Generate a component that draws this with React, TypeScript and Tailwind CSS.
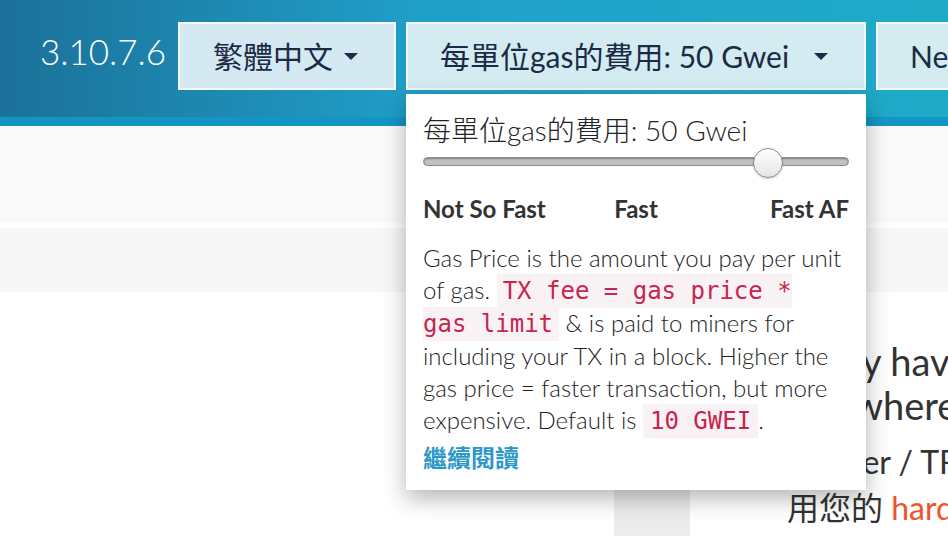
export default function App() {
  return (
    <div className="relative w-[948px] h-[536px] overflow-hidden bg-white font-['Lato','Noto_Sans_CJK_TC',sans-serif] text-[#333]">
      <header className="h-[117px] bg-linear-to-r from-[#1b7199] via-[#20a0ca] via-45% to-[#1faac8]">
        <div className="flex items-start pt-[22px] pl-[40px] gap-[10px]">
          <div className="shrink-0 w-[128px] h-[58px] flex items-center text-[35px] font-light text-white leading-none whitespace-nowrap">3.10.7.6</div>
          <button className="shrink-0 w-[218px] h-[68px] flex items-center justify-between pl-[33px] pr-[36px] bg-[#d4e9f1] border-2 border-[#f3f9fb] text-[#1c2b45] text-[30px] leading-none">
            <span>繁體中文</span>
            <span className="w-0 h-0 border-x-[7px] border-x-transparent border-t-[7px] border-t-[#1d2d49]" />
          </button>
          <div className="relative shrink-0">
            <button className="w-[460px] h-[68px] flex items-center justify-between pl-[32px] pr-[36px] bg-[#d4ebf2] border-2 border-[#f3f9fb] text-[#1c2b45] text-[30px] leading-none whitespace-nowrap">
              <span>每單位gas的費用: 50 Gwei</span>
              <span className="w-0 h-0 border-x-[7px] border-x-transparent border-t-[7px] border-t-[#1d2d49]" />
            </button>
            <div className="absolute left-0 top-[72px] z-10 w-[460px] bg-white pt-[20px] px-[17px] pb-[16px] shadow-[0_8px_22px_rgba(0,0,0,0.3)]">
              <div className="h-[32px] leading-[32px] text-[28px] font-light text-[#222] whitespace-nowrap">每單位gas的費用: 50 Gwei</div>
              <div className="relative h-[32px]">
                <div className="absolute left-0 right-0 top-[11px] h-[9px] rounded-full bg-[#c2c2c2] border border-[#8e8e8e] shadow-[inset_0_1px_2px_rgba(0,0,0,0.35)]" />
                <div className="absolute left-[330px] top-[2px] w-[30px] h-[30px] rounded-full border border-[#8a8a8a] bg-linear-to-b from-white to-[#e4e4e4] shadow-[0_1px_2px_rgba(0,0,0,0.2)]" />
              </div>
              <div className="mt-[17px] grid grid-cols-3 h-[28px] leading-[28px] text-[24px] font-bold text-[#333]">
                <span className="text-left whitespace-nowrap">Not So Fast</span>
                <span className="text-center">Fast</span>
                <span className="text-right whitespace-nowrap">Fast AF</span>
              </div>
              <p className="mt-[19px] text-[24px] leading-[32px] font-light text-[#1e1e1e]">
                Gas Price is the amount you pay per unit of gas.{' '}
                <code className="px-[6px] py-[3px] bg-[#f9f2f4] text-[#c7254e] font-['DejaVu_Sans_Mono',monospace] font-normal text-[24px]">TX fee = gas price * gas limit</code>{' '}
                &amp; is paid to miners for including your TX in a block. Higher the gas price = faster transaction, but more expensive. Default is{' '}
                <code className="px-[7px] py-[3px] bg-[#f9f2f4] text-[#c7254e] font-['DejaVu_Sans_Mono',monospace] font-normal text-[24px]">10 GWEI</code>.
              </p>
              <a className="block mt-[5px] h-[32px] leading-[32px] text-[24px] font-semibold text-[#2a97c7]">繼續閱讀</a>
            </div>
          </div>
          <button className="shrink-0 w-[300px] h-[68px] flex items-center pl-[32px] bg-[#d4ecef] border-2 border-[#f3f9fb] text-[#1c2b45] text-[30px] leading-none">
            <span>Network</span>
          </button>
        </div>
      </header>
      <div className="h-[9px] bg-[#1496c5]" />
      <div className="h-[97px] bg-[#fafafa]" />
      <div className="h-[5px] bg-white" />
      <div className="h-[64px] bg-[#f7f7f7]" />
      <main className="flex pl-[614px]">
        <div className="shrink-0 w-[76px] h-[260px] mt-[40px] bg-[#ececec]" />
        <div className="shrink-0 ml-[64px] whitespace-nowrap">
          <div className="mt-[47px] text-[38px] leading-[44px] text-[#333]">
            <div>Already have a wallet</div>
            <div className="ml-[10px]">somewhere?</div>
          </div>
          <div className="mt-[15px] ml-[42px] text-[32px] leading-[40px] text-[#333]">Ledger / TREZOR / Digital Bitbox</div>
          <div className="mt-[6px] ml-[33px] text-[32px] leading-[40px] text-[#333]">
            用您的 <span className="text-[#f0532b]">hardware wallet</span>
          </div>
        </div>
      </main>
    </div>
  );
}
